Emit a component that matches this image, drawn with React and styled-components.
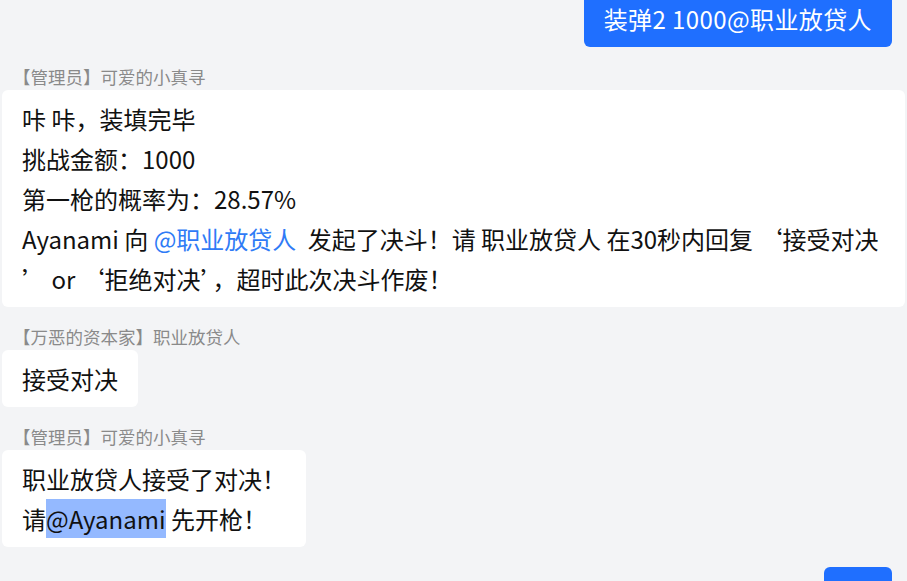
import React from 'react';
import styled, { createGlobalStyle } from 'styled-components';

const GlobalStyle = createGlobalStyle`
    html, body {
        margin: 0;
        padding: 0;
        background: #f3f4f6;
        overflow: hidden;
    }
    body {
        font-family: "Noto Sans CJK SC", "Noto Sans", sans-serif;
    }
`;

const messages = [
    { id: 1, self: true, lines: [['装弹2 1000@职业放贷人']] },
    {
        id: 2,
        name: '【管理员】可爱的小真寻',
        wide: true,
        lines: [
            ['咔 咔，装填完毕'],
            ['挑战金额：1000'],
            ['第一枪的概率为：28.57%'],
            ['Ayanami 向 ', { at: '@职业放贷人' }, ' 发起了决斗！请 职业放贷人 在30秒内回复 ‘接受对决'],
            ['’ or ‘拒绝对决’，超时此次决斗作废！'],
        ],
    },
    { id: 3, name: '【万恶的资本家】职业放贷人', lines: [['接受对决']] },
    {
        id: 4,
        name: '【管理员】可爱的小真寻',
        lines: [
            ['职业放贷人接受了对决！'],
            ['请', { sel: '@Ayanami' }, ' 先开枪！'],
        ],
    },
    { id: 5, self: true, lines: [['　']] },
];

export default function App() {
    return (
        <>
            <GlobalStyle />
            <ChatList>
                {messages.map((msg) => (
                    <Message key={msg.id} $self={msg.self}>
                        {msg.name && <Sender>{msg.name}</Sender>}
                        <Bubble $self={msg.self} $wide={msg.wide}>
                            {msg.lines.map((line, i) => (
                                <Line key={i}>
                                    {line.map((part, j) => {
                                        if (typeof part === 'string') return <React.Fragment key={j}>{part}</React.Fragment>;
                                        if (part.at) return <Mention key={j}>{part.at}</Mention>;
                                        return <Selected key={j}>{part.sel}</Selected>;
                                    })}
                                </Line>
                            ))}
                        </Bubble>
                    </Message>
                ))}
            </ChatList>
        </>
    );
}

const ChatList = styled.div`
    display: flex;
    flex-direction: column;
    gap: 20px;
    margin-top: -10px;
    padding: 0 2px;
    height: 600px;
`;

const Message = styled.div`
    display: flex;
    flex-direction: column;
    align-items: ${({ $self }) => ($self ? 'flex-end' : 'flex-start')};
    padding-right: ${({ $self }) => ($self ? '13px' : '0')};
`;

const Sender = styled.div`
    font-size: 17.5px;
    line-height: 20px;
    color: #8a8a8a;
    padding-left: 11px;
    margin-bottom: 3px;
`;

const Bubble = styled.div`
    align-self: ${({ $wide }) => ($wide ? 'stretch' : 'auto')};
    background: ${({ $self }) => ($self ? '#1f6fff' : '#ffffff')};
    color: ${({ $self }) => ($self ? '#ffffff' : '#111111')};
    border-radius: 6px;
    padding: 9px 20px 8px;
    font-size: 24px;
    line-height: 40px;
    letter-spacing: ${({ $self }) => ($self ? '0.4px' : '0')};
    min-width: 28px;
`;

const Line = styled.div`
    white-space: nowrap;
`;

const Mention = styled.span`
    color: #2f7bf6;
    margin-right: 6px;
`;

const Selected = styled.span`
    background: #94b9ff;
    padding: 2px 0;
`;
